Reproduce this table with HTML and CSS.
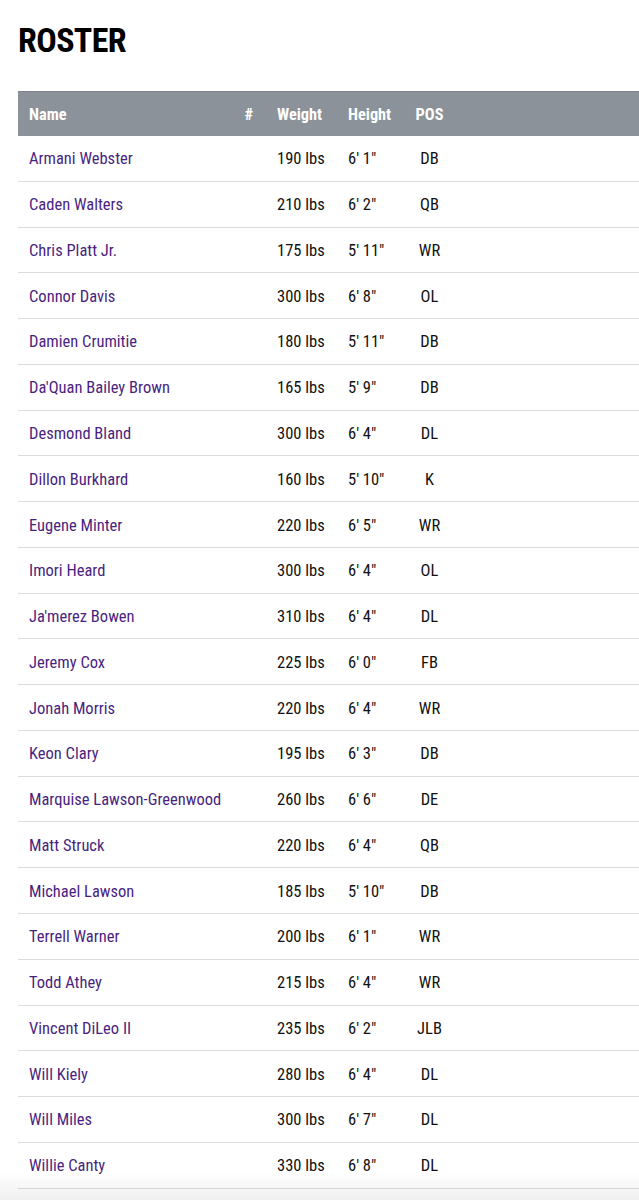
FILE: index.html
```html
<!DOCTYPE html>
<html lang="en">
<head>
<meta charset="utf-8">
<title>Roster</title>
<link rel="stylesheet" href="styles.css">
</head>
<body>
<main class="page">
  <h1 class="title">ROSTER</h1>
  <div class="roster">
    <div class="row head">
      <div class="c name">Name</div><div class="c num">#</div><div class="c wt">Weight</div><div class="c ht">Height</div><div class="c pos">POS</div><div class="c fill"></div>
    </div>
    <div class="row"><div class="c name"><a href="#">Armani Webster</a></div><div class="c num"></div><div class="c wt">190 lbs</div><div class="c ht">6' 1"</div><div class="c pos">DB</div><div class="c fill"></div></div>
    <div class="row"><div class="c name"><a href="#">Caden Walters</a></div><div class="c num"></div><div class="c wt">210 lbs</div><div class="c ht">6' 2"</div><div class="c pos">QB</div><div class="c fill"></div></div>
    <div class="row"><div class="c name"><a href="#">Chris Platt Jr.</a></div><div class="c num"></div><div class="c wt">175 lbs</div><div class="c ht">5' 11"</div><div class="c pos">WR</div><div class="c fill"></div></div>
    <div class="row"><div class="c name"><a href="#">Connor Davis</a></div><div class="c num"></div><div class="c wt">300 lbs</div><div class="c ht">6' 8"</div><div class="c pos">OL</div><div class="c fill"></div></div>
    <div class="row"><div class="c name"><a href="#">Damien Crumitie</a></div><div class="c num"></div><div class="c wt">180 lbs</div><div class="c ht">5' 11"</div><div class="c pos">DB</div><div class="c fill"></div></div>
    <div class="row"><div class="c name"><a href="#">Da'Quan Bailey Brown</a></div><div class="c num"></div><div class="c wt">165 lbs</div><div class="c ht">5' 9"</div><div class="c pos">DB</div><div class="c fill"></div></div>
    <div class="row"><div class="c name"><a href="#">Desmond Bland</a></div><div class="c num"></div><div class="c wt">300 lbs</div><div class="c ht">6' 4"</div><div class="c pos">DL</div><div class="c fill"></div></div>
    <div class="row"><div class="c name"><a href="#">Dillon Burkhard</a></div><div class="c num"></div><div class="c wt">160 lbs</div><div class="c ht">5' 10"</div><div class="c pos">K</div><div class="c fill"></div></div>
    <div class="row"><div class="c name"><a href="#">Eugene Minter</a></div><div class="c num"></div><div class="c wt">220 lbs</div><div class="c ht">6' 5"</div><div class="c pos">WR</div><div class="c fill"></div></div>
    <div class="row"><div class="c name"><a href="#">Imori Heard</a></div><div class="c num"></div><div class="c wt">300 lbs</div><div class="c ht">6' 4"</div><div class="c pos">OL</div><div class="c fill"></div></div>
    <div class="row"><div class="c name"><a href="#">Ja'merez Bowen</a></div><div class="c num"></div><div class="c wt">310 lbs</div><div class="c ht">6' 4"</div><div class="c pos">DL</div><div class="c fill"></div></div>
    <div class="row"><div class="c name"><a href="#">Jeremy Cox</a></div><div class="c num"></div><div class="c wt">225 lbs</div><div class="c ht">6' 0"</div><div class="c pos">FB</div><div class="c fill"></div></div>
    <div class="row"><div class="c name"><a href="#">Jonah Morris</a></div><div class="c num"></div><div class="c wt">220 lbs</div><div class="c ht">6' 4"</div><div class="c pos">WR</div><div class="c fill"></div></div>
    <div class="row"><div class="c name"><a href="#">Keon Clary</a></div><div class="c num"></div><div class="c wt">195 lbs</div><div class="c ht">6' 3"</div><div class="c pos">DB</div><div class="c fill"></div></div>
    <div class="row"><div class="c name"><a href="#">Marquise Lawson-Greenwood</a></div><div class="c num"></div><div class="c wt">260 lbs</div><div class="c ht">6' 6"</div><div class="c pos">DE</div><div class="c fill"></div></div>
    <div class="row"><div class="c name"><a href="#">Matt Struck</a></div><div class="c num"></div><div class="c wt">220 lbs</div><div class="c ht">6' 4"</div><div class="c pos">QB</div><div class="c fill"></div></div>
    <div class="row"><div class="c name"><a href="#">Michael Lawson</a></div><div class="c num"></div><div class="c wt">185 lbs</div><div class="c ht">5' 10"</div><div class="c pos">DB</div><div class="c fill"></div></div>
    <div class="row"><div class="c name"><a href="#">Terrell Warner</a></div><div class="c num"></div><div class="c wt">200 lbs</div><div class="c ht">6' 1"</div><div class="c pos">WR</div><div class="c fill"></div></div>
    <div class="row"><div class="c name"><a href="#">Todd Athey</a></div><div class="c num"></div><div class="c wt">215 lbs</div><div class="c ht">6' 4"</div><div class="c pos">WR</div><div class="c fill"></div></div>
    <div class="row"><div class="c name"><a href="#">Vincent DiLeo II</a></div><div class="c num"></div><div class="c wt">235 lbs</div><div class="c ht">6' 2"</div><div class="c pos">JLB</div><div class="c fill"></div></div>
    <div class="row"><div class="c name"><a href="#">Will Kiely</a></div><div class="c num"></div><div class="c wt">280 lbs</div><div class="c ht">6' 4"</div><div class="c pos">DL</div><div class="c fill"></div></div>
    <div class="row"><div class="c name"><a href="#">Will Miles</a></div><div class="c num"></div><div class="c wt">300 lbs</div><div class="c ht">6' 7"</div><div class="c pos">DL</div><div class="c fill"></div></div>
    <div class="row"><div class="c name"><a href="#">Willie Canty</a></div><div class="c num"></div><div class="c wt">330 lbs</div><div class="c ht">6' 8"</div><div class="c pos">DL</div><div class="c fill"></div></div>
  </div>
</main>
<div class="fade"></div>
</body>
</html>
```

FILE: styles.css
```css
html, body {
  margin: 0;
  padding: 0;
  background: #ffffff;
}

body {
  font-family: "Roboto Condensed", "Liberation Sans Narrow", Roboto, sans-serif;
  color: #111111;
  overflow: hidden;
}

.page {
  padding: 20px 0 0 18px;
}

.title {
  margin: 0;
  font-size: 34px;
  line-height: 40px;
  font-weight: 700;
  color: #000000;
  letter-spacing: -0.6px;
}

.roster {
  margin-top: 31px;
  display: flex;
  flex-direction: column;
}

.row {
  display: grid;
  grid-template-columns: 222px 26px 71px 67px 51px 1fr;
  height: 45.78px;
  box-sizing: border-box;
  border-bottom: 1px solid #dcdcdc;
  align-items: center;
  font-size: 16.5px;
  padding-top: 1px;
}

.row.head {
  height: 45px;
  background: #8b9299;
  border-top: 1px solid #7d848b;
  border-bottom: none;
  color: #ffffff;
  font-weight: 700;
  font-size: 16.3px;
  padding-top: 0;
}

.c {
  padding: 0 11px;
  white-space: nowrap;
}

.num {
  padding: 0 13px 0 0;
  text-align: right;
}

.pos {
  padding: 0;
  text-align: center;
}

.name a {
  color: #4a1f7f;
  text-decoration: none;
}

.fade {
  position: fixed;
  left: 0;
  right: 0;
  bottom: 0;
  height: 28px;
  background: linear-gradient(to bottom, rgba(0,0,0,0), rgba(0,0,0,0.06));
  pointer-events: none;
}
```
